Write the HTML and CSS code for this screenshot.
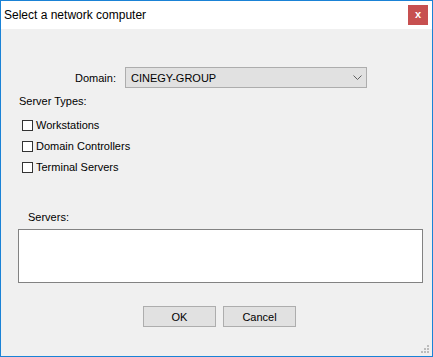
FILE: index.html
```html
<!DOCTYPE html>
<html>
<head>
<meta charset="utf-8">
<link rel="stylesheet" href="styles.css">
</head>
<body>
<div class="window">
  <div class="titlebar">
    <span class="title">Select a network computer</span>
    <span class="close">x</span>
  </div>
  <div class="content">
    <div class="domain-row">
      <span class="domain-label">Domain:</span>
      <div class="combo">
        <span class="combo-text">CINEGY-GROUP</span>
        <svg class="chevron" width="9" height="5" viewBox="0 0 9 5"><polyline points="0.5,0.5 4.5,4.5 8.5,0.5" fill="none" stroke="#606060" stroke-width="1"/></svg>
      </div>
    </div>
    <div class="types-label">Server Types:</div>
    <div class="check-row"><span class="box"></span><span>Workstations</span></div>
    <div class="check-row"><span class="box"></span><span>Domain Controllers</span></div>
    <div class="check-row"><span class="box"></span><span>Terminal Servers</span></div>
    <div class="servers-label">Servers:</div>
    <div class="listbox"></div>
    <div class="buttons">
      <div class="btn">OK</div>
      <div class="btn">Cancel</div>
    </div>
  </div>
  <svg class="grip" width="9" height="9" viewBox="0 0 9 9">
    <rect x="6" y="0" width="2" height="2" fill="#bcbcbc"/>
    <rect x="3" y="3" width="2" height="2" fill="#bcbcbc"/>
    <rect x="6" y="3" width="2" height="2" fill="#bcbcbc"/>
    <rect x="0" y="6" width="2" height="2" fill="#bcbcbc"/>
    <rect x="3" y="6" width="2" height="2" fill="#bcbcbc"/>
    <rect x="6" y="6" width="2" height="2" fill="#bcbcbc"/>
  </svg>
</div>
</body>
</html>
```
FILE: styles.css
```css
html, body {
  margin: 0;
  padding: 0;
  background: #f0f0f0;
}
.window {
  position: relative;
  width: 433px;
  height: 357px;
  box-sizing: border-box;
  border: 1px solid #1a82d6;
  background: #f0f0f0;
  display: flex;
  flex-direction: column;
  font-family: "Liberation Sans", Arial, sans-serif;
  font-size: 11px;
  color: #000;
}
.titlebar {
  height: 28px;
  background: #fff;
  display: flex;
  align-items: center;
  justify-content: space-between;
  padding: 0 4px 0 3px;
  flex-shrink: 0;
}
.title {
  font-size: 12px;
  color: #000;
}
.close {
  width: 20px;
  height: 20px;
  background: #c75050;
  color: #fff;
  font-weight: bold;
  font-size: 11px;
  display: flex;
  align-items: center;
  justify-content: center;
  line-height: 1;
  padding-bottom: 1px;
  box-sizing: border-box;
}
.content {
  flex: 1;
  display: flex;
  flex-direction: column;
  padding-left: 17px;
}
.domain-row {
  display: flex;
  align-items: center;
  margin-top: 38px;
}
.domain-label {
  width: 98px;
  text-align: right;
  margin-right: 9px;
}
.combo {
  width: 242px;
  height: 21px;
  box-sizing: border-box;
  border: 1px solid #adadad;
  background: #e1e1e1;
  display: flex;
  align-items: center;
  justify-content: space-between;
  padding: 0 4px 0 5px;
}
.chevron {
  display: block;
}
.types-label {
  margin-top: 7px;
  margin-left: 1px;
  line-height: 13px;
}
.check-row {
  height: 21px;
  display: flex;
  align-items: center;
  margin-left: 4px;
}
.check-row:first-of-type {
  margin-top: 0;
}
.types-label + .check-row {
  margin-top: 6px;
}
.box {
  width: 11px;
  height: 11px;
  box-sizing: border-box;
  border: 1px solid #333;
  background: #fff;
  margin-right: 3px;
  margin-top: 1px;
}
.servers-label {
  margin-top: 34px;
  margin-left: 10px;
  line-height: 13px;
}
.listbox {
  margin-top: 5px;
  width: 405px;
  height: 54px;
  box-sizing: border-box;
  border: 1px solid #828282;
  background: #fff;
}
.buttons {
  display: flex;
  gap: 7px;
  margin-top: 23px;
  margin-left: 125px;
}
.btn {
  width: 73px;
  height: 21px;
  box-sizing: border-box;
  border: 1px solid #adadad;
  background: #e1e1e1;
  display: flex;
  align-items: center;
  justify-content: center;
}
.grip {
  position: absolute;
  right: 2px;
  bottom: 2px;
}
```
